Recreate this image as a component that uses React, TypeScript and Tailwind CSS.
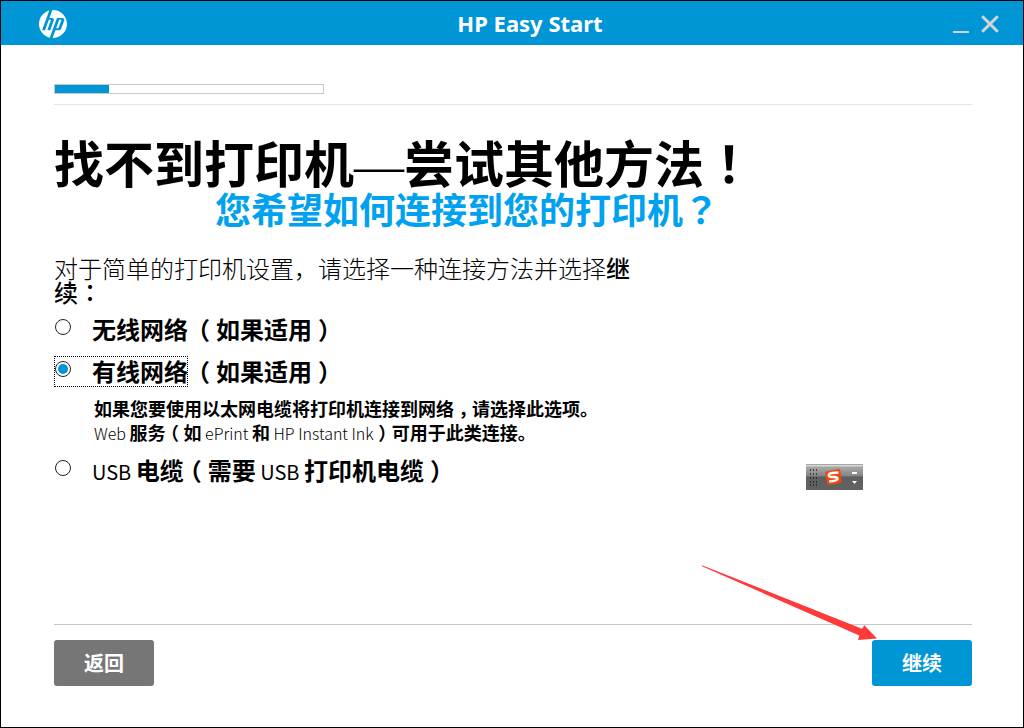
import { useState } from "react";
import type { ReactNode } from "react";
import { SiHp } from "react-icons/si";

/** Full-width punctuation centred in its em box. */
function Mark({ children }: { children: ReactNode }) {
  return (
    <span className="inline-block w-[1em] text-center font-['Noto_Sans_CJK_TC',sans-serif]">
      {children}
    </span>
  );
}

/** Bracket or comma, set half-width and centred in its em box. */
function Bracket({ children }: { children: ReactNode }) {
  return (
    <span className="inline-block w-[1em] text-center [font-feature-settings:'halt']">
      {children}
    </span>
  );
}

type OptionProps = {
  id: string;
  checked: boolean;
  onSelect: (id: string) => void;
  children: ReactNode;
};

function Option({ id, checked, onSelect, children }: OptionProps) {
  return (
    <div className="flex h-[31px] items-center">
      <div className="flex h-[31px] items-start pt-[5px] pl-px">
        <input
          id={id}
          type="radio"
          name="connection"
          checked={checked}
          onChange={() => onSelect(id)}
          className="size-4 shrink-0 appearance-none rounded-full border border-[#222] bg-white bg-clip-content p-[2px] checked:bg-[#0096d6]"
        />
      </div>
      <label htmlFor={id} className="pb-[2px] pl-[21px] text-2xl font-bold whitespace-nowrap">
        {children}
      </label>
    </div>
  );
}

function Arrow() {
  return (
    <svg
      className="pointer-events-none absolute -top-[75px] -left-[170px] h-[76px] w-[176px]"
      viewBox="702 565 176 76"
      aria-hidden="true"
    >
      <path
        d="M702 565.2 L862 628.7 L864.3 625.3 L877 638.6 L858 640 L859.3 635.6 L702 566.2 Z"
        fill="#ff3a3a"
      />
    </svg>
  );
}

function InputMethodBar() {
  return (
    <div className="absolute top-[463px] right-[160px] h-[26px] w-[57px]">
      <svg viewBox="0 0 57 26" className="size-full" aria-hidden="true">
        <defs>
          <linearGradient id="ime" x1="0" y1="0" x2="0" y2="1">
            <stop offset="0" stopColor="#8c8c8c" />
            <stop offset="0.06" stopColor="#dcdcdc" />
            <stop offset="0.12" stopColor="#a8a8a8" />
            <stop offset="0.45" stopColor="#858585" />
            <stop offset="0.5" stopColor="#5f5f5f" />
            <stop offset="1" stopColor="#626262" />
          </linearGradient>
        </defs>
        <rect width="57" height="26" fill="url(#ime)" />
        {[6, 10, 14, 18, 21].map((y) => (
          <path
            key={y}
            d={`M4 ${y}h1M7 ${y}h1M10 ${y}h1`}
            stroke="#222"
            strokeWidth="1.4"
          />
        ))}
        <path
          d="M20.5 7.5 L32.5 5 Q34 5 34.3 6.5 L35.5 17 Q35.5 18.5 34 19 L23 21 Q21.6 21 21.2 19.6 L19.2 9 Q19.2 7.8 20.5 7.5Z"
          fill="#f4460b"
        />
        <path
          d="M32.5 8.6 L26 9.1 Q22.4 9.6 22.9 11.8 Q23.4 13.2 28 13.1 Q31.9 13.1 31.5 14.9 Q31 17 23.2 17.3"
          fill="none"
          stroke="#fff"
          strokeWidth="2.5"
        />
        <path d="M46 8h5v2h-5zM46 17h5l-2.5 3z" fill="#fff" />
      </svg>
    </div>
  );
}

export default function App() {
  const [choice, setChoice] = useState("wired");

  return (
    <div className="relative flex min-h-screen flex-col border border-black bg-white font-['Noto_Sans_CJK_SC',sans-serif] text-black">
      <header className="grid h-11 grid-cols-[1fr_auto_1fr] items-center bg-[#0096d6] pt-px pr-6 pl-[38px] text-white">
        <SiHp className="size-7" aria-label="HP" />
        <h1 className="pb-px pl-[22px] font-['Noto_Sans',sans-serif] text-[22px] font-bold">
          HP Easy Start
        </h1>
        <div className="flex justify-end gap-3 text-[#d4d4d4]">
          <button type="button" aria-label="Minimize" className="flex h-[18px] w-4 items-end">
            <span className="h-[2px] w-full bg-[#d4d4d4]" />
          </button>
          <button type="button" aria-label="Close">
            <svg viewBox="0 0 18 18" className="size-[18px]" aria-hidden="true">
              <path d="M1.2 1.2 16.8 16.8M16.8 1.2 1.2 16.8" stroke="currentColor" strokeWidth="3" />
            </svg>
          </button>
        </div>
      </header>

      <main className="flex flex-1 flex-col pt-[39px] pr-[51px] pb-[41px] pl-[53px]">
        <div
          role="progressbar"
          aria-label="HP Easy Start"
          aria-valuenow={20}
          className="h-[10px] w-[270px] border border-[#c8c8c8]"
        >
          <div className="h-full w-1/5 bg-[#0096d6]" />
        </div>
        <hr className="mt-[10px] border-[#e5e5e5]" />

        <h2 className="mt-[31px] text-[50px] leading-[50px] font-bold">
          找不到打印机
          <span className="font-['Liberation_Serif',serif] leading-none font-normal [line-height:0]">—</span>
          尝试其他方法<Mark>！</Mark>
        </h2>
        <p className="mt-px pl-[161px] text-4xl leading-[42px] font-bold text-[#00a2f0]">
          您希望如何连接到您的打印机<Mark>？</Mark>
        </p>

        <p className="mt-[27px] max-w-[590px] text-2xl leading-6 font-light">
          对于简单的打印机设置，请选择一种连接方法并选择
          <strong className="font-medium">
            继续<Mark>：</Mark>
          </strong>
        </p>

        <div role="radiogroup" className="mt-[10px]">
          <Option id="wireless" checked={choice === "wireless"} onSelect={setChoice}>
            无线网络
            <span className="pl-1">
              <Bracket>（</Bracket>如果适用<Bracket>）</Bracket>
            </span>
          </Option>
          <div className="relative mt-[11px]">
            <Option id="wired" checked={choice === "wired"} onSelect={setChoice}>
              有线网络
              <span className="pl-1">
                <Bracket>（</Bracket>如果适用<Bracket>）</Bracket>
              </span>
            </Option>
            <div className="pointer-events-none absolute inset-y-0 left-0 w-[134px] border border-dotted border-black" />
          </div>
          <p className="mt-[9px] pl-10 text-lg leading-6 font-bold">
            如果您要使用以太网电缆将打印机连接到网络<Bracket>，</Bracket>请选择此选项。
            <br />
            <span className="text-base leading-6 font-light">Web </span>服务<Bracket>（</Bracket>如
            <span className="text-base leading-6 font-light"> ePrint </span>和
            <span className="text-base leading-6 font-light"> HP Instant Ink</span>
            <Bracket>）</Bracket>可用于此类连接。
          </p>
          <div className="mt-[10px]">
            <Option id="usb" checked={choice === "usb"} onSelect={setChoice}>
              <span className="text-xl font-normal">USB </span>
              电缆<Bracket>（</Bracket>需要
              <span className="text-xl font-normal"> USB </span>
              打印机电缆<Bracket>）</Bracket>
            </Option>
          </div>
        </div>

        <footer className="mt-auto flex justify-between border-t border-[#c8c8c8] pt-[15px] text-xl font-bold text-white">
          <button type="button" className="h-[46px] w-[100px] rounded-[3px] bg-[#767676]">
            返回
          </button>
          <div className="relative">
            <button type="button" className="h-[46px] w-[100px] rounded-[3px] bg-[#0096d6]">
              继续
            </button>
            <Arrow />
          </div>
        </footer>
      </main>

      <InputMethodBar />
    </div>
  );
}
